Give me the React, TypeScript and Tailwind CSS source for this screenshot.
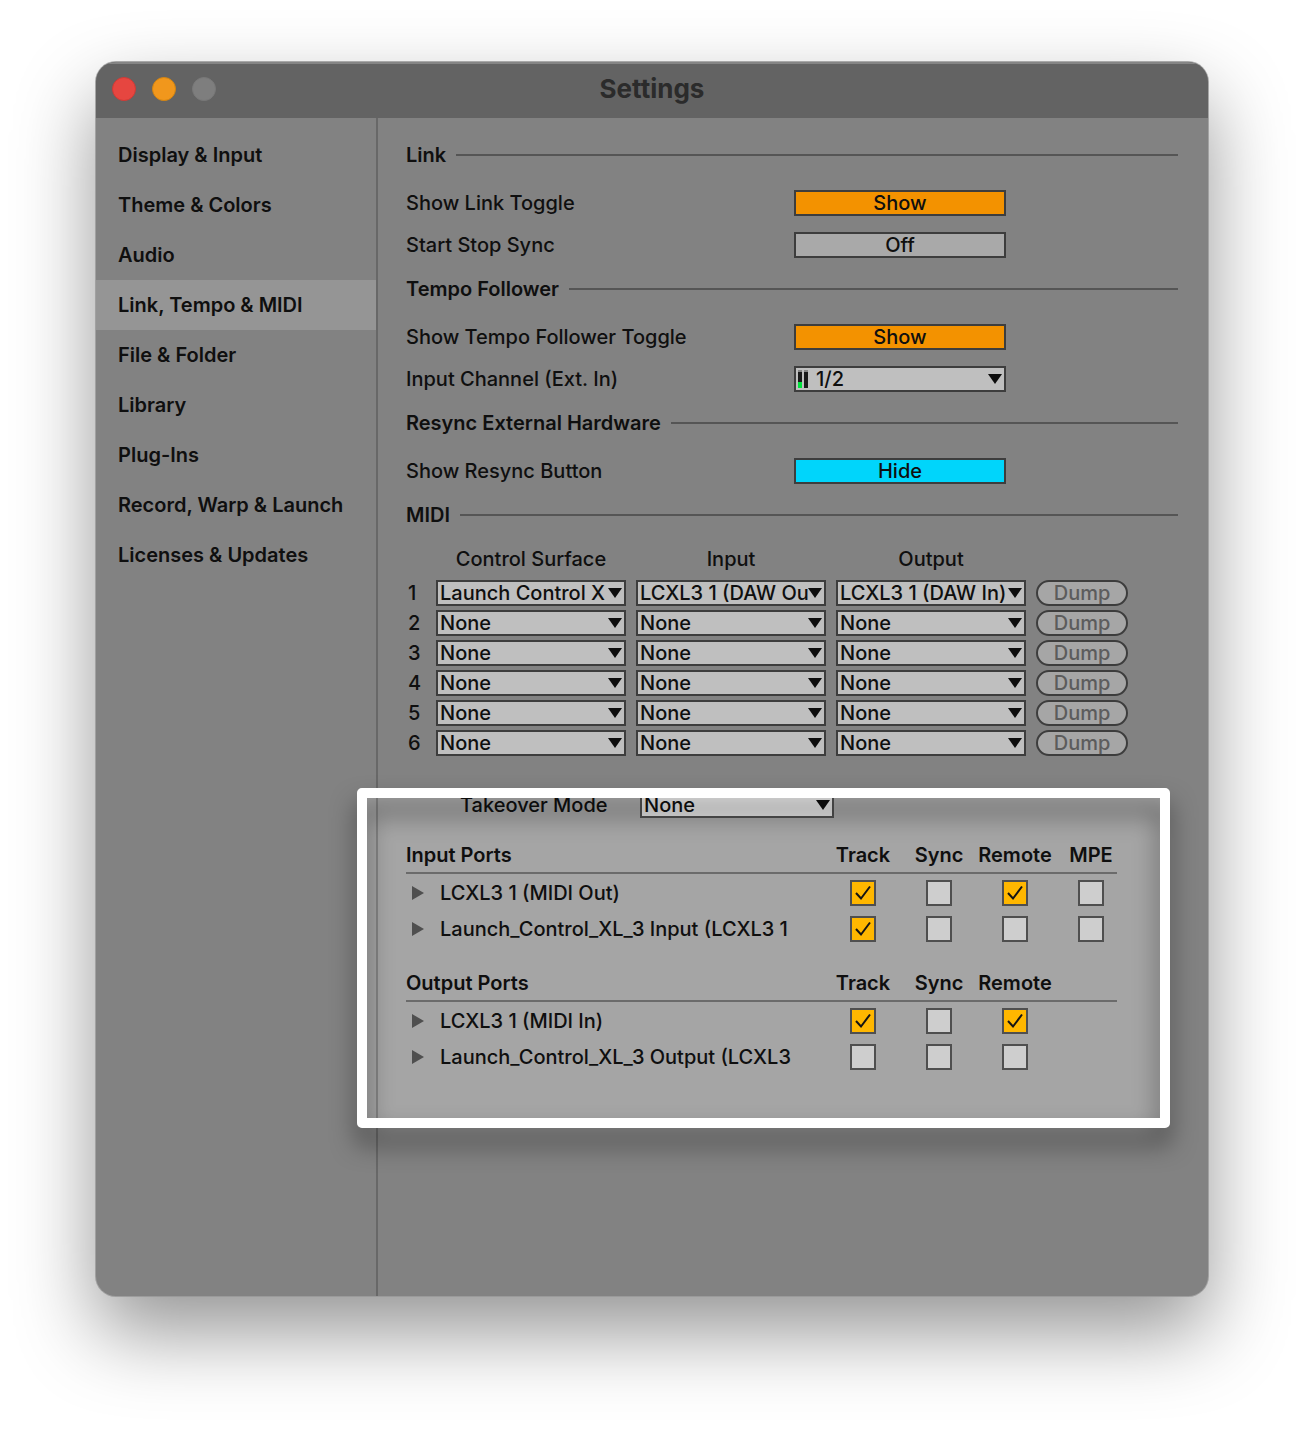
import React from "react";
import clsx from "clsx";

const pages = [
  "Display & Input",
  "Theme & Colors",
  "Audio",
  "Link, Tempo & MIDI",
  "File & Folder",
  "Library",
  "Plug-Ins",
  "Record, Warp & Launch",
  "Licenses & Updates",
];

const surfaces = [
  { surface: "Launch Control X", input: "LCXL3 1 (DAW Ou", output: "LCXL3 1 (DAW In)" },
  { surface: "None", input: "None", output: "None" },
  { surface: "None", input: "None", output: "None" },
  { surface: "None", input: "None", output: "None" },
  { surface: "None", input: "None", output: "None" },
  { surface: "None", input: "None", output: "None" },
];

type Port = { name: string; checks: boolean[] };

const inputPorts: Port[] = [
  { name: "LCXL3 1 (MIDI Out)", checks: [true, false, true, false] },
  { name: "Launch_Control_XL_3 Input (LCXL3 1", checks: [true, false, false, false] },
];

const outputPorts: Port[] = [
  { name: "LCXL3 1 (MIDI In)", checks: [true, false, true] },
  { name: "Launch_Control_XL_3 Output (LCXL3", checks: [false, false, false] },
];

const SectionHeader = ({ title }: { title: string }) => (
  <div className="flex h-[26px] items-center gap-2.5">
    <h2 className="font-semibold">{title}</h2>
    <div className="h-0.5 flex-1 bg-[#555555]" />
  </div>
);

const Row = ({ label, htmlFor, children }: { label: string; htmlFor: string; children: React.ReactNode }) => (
  <div className="flex h-[26px] items-center">
    <label htmlFor={htmlFor} className="w-[388px] shrink-0">{label}</label>
    <div className="w-[212px]">{children}</div>
  </div>
);

const Toggle = ({ id, text, color }: { id: string; text: string; color: string }) => (
  <button id={id} type="button" className={clsx("block h-[26px] w-full border-2 border-[#3d3d3d] text-center leading-[22px]", color)}>
    {text}
  </button>
);

type DropdownProps = { id?: string; value: string; label?: string; meter?: boolean; lit?: boolean };

const Dropdown = ({ id, value, label, meter = false, lit = false }: DropdownProps) => (
  <div className="relative">
    <select
      id={id}
      aria-label={label}
      defaultValue={value}
      className={clsx(
        "block h-[26px] w-full appearance-none rounded-none border-2 pr-4 leading-[22px]",
        meter ? "pl-5" : "pl-0.5",
        lit ? "border-[#4f4f4f] bg-[#e2e2e2]" : "border-[#3d3d3d] bg-[#bfbfbf]"
      )}
    >
      <option>{value}</option>
    </select>
    {meter && (
      <svg className="pointer-events-none absolute top-1 left-1" width="10" height="18" viewBox="0 0 10 18">
        <path d="M0 0h4v2H0zM6 0h4v2H6z" fill="#858585" />
        <path d="M0 2h4v10H0zM6 2h4v16H6z" fill="#1a1a1a" />
        <path d="M0 12h4v6H0z" fill="#00e13c" />
      </svg>
    )}
    <svg className="pointer-events-none absolute top-2 right-1" width="14" height="10" viewBox="0 0 14 10">
      <path d="M0 0h14L7 10z" fill="#0d0d0d" />
    </svg>
  </div>
);

const CheckBox = ({ label, checked }: { label: string; checked: boolean }) => (
  <span className="relative mx-auto block h-[26px] w-[26px]">
    <input
      type="checkbox"
      aria-label={label}
      defaultChecked={checked}
      className="peer block h-[26px] w-[26px] appearance-none border-2 border-[#4f4f4f] bg-[#cecece] checked:bg-[#ffb700]"
    />
    <svg className="pointer-events-none absolute inset-0 hidden peer-checked:block" width="26" height="26" viewBox="0 0 26 26">
      <path d="M6 13l5 5.5L20 6.5" fill="none" stroke="#141414" strokeWidth="2" />
    </svg>
  </span>
);

const PortTable = ({ title, columns, ports }: { title: string; columns: string[]; ports: Port[] }) => (
  <table className="w-[711px] table-fixed border-separate border-spacing-0">
    <colgroup>
      <col className="w-[419px]" />
      <col className="w-[76px]" />
      <col className="w-[76px]" />
      <col className="w-[76px]" />
      <col className="w-[64px]" />
    </colgroup>
    <thead>
      <tr>
        <th className="h-8 border-b-2 border-[#6b6b6b] pb-1 text-left font-semibold">{title}</th>
        {[0, 1, 2, 3].map((i) => (
          <th key={i} className="border-b-2 border-[#6b6b6b] pb-1 font-semibold last:pl-3">
            <span className="flex justify-center whitespace-nowrap">{columns[i]}</span>
          </th>
        ))}
      </tr>
    </thead>
    <tbody>
      {ports.map((port) => (
        <tr key={port.name}>
          <td className="pt-1.5 pb-1">
            <div className="flex h-[26px] items-center whitespace-nowrap">
              <button type="button" aria-label={`Expand ${port.name}`} className="mr-4 ml-1.5 shrink-0">
                <svg width="12" height="14" viewBox="0 0 12 14">
                  <path d="M0 0l12 7-12 7z" fill="#4f4f4f" />
                </svg>
              </button>
              {port.name}
            </div>
          </td>
          {[0, 1, 2, 3].map((i) => (
            <td key={i} className="pt-1.5 pb-1 last:pl-3">
              {i < port.checks.length && <CheckBox label={`${port.name} ${columns[i]}`} checked={port.checks[i]} />}
            </td>
          ))}
        </tr>
      ))}
    </tbody>
  </table>
);

export default function App() {
  return (
    <div className="min-h-screen bg-white px-24 pt-[62px] pb-[134px] font-['Inter',sans-serif] text-[20px] leading-[26px] font-[450] text-[#0f0f0f]">
      <div className="min-w-[1112px] overflow-hidden rounded-[20px] bg-[#828282] shadow-[0_0_0_1px_rgba(150,150,150,0.8),0_36px_80px_rgba(0,0,0,0.42)]">
        {/* Title bar */}
        <header className="relative flex h-14 items-center justify-center bg-[#636363] pb-0.5 shadow-[inset_0_2px_0_#858585]">
          <div className="absolute left-4 flex gap-4">
            <button type="button" aria-label="Close" className="h-6 w-6 rounded-full border border-[#cf3a35] bg-[#e64640]" />
            <button type="button" aria-label="Minimize" className="h-6 w-6 rounded-full border border-[#d48410] bg-[#f1971c]" />
            <button type="button" aria-label="Zoom" className="h-6 w-6 rounded-full border border-[#787878] bg-[#7e7e7e]" />
          </div>
          <h1 className="text-[26px] font-bold text-[#2b2b2b]">Settings</h1>
        </header>

        <div className="isolate flex">
          <aside className="w-[282px] shrink-0 border-r-2 border-black/20 pt-3">
            <nav>
              {pages.map((page) => (
                <a
                  key={page}
                  href="#"
                  className={clsx("flex h-[50px] items-center pl-[22px] font-semibold whitespace-nowrap", page === "Link, Tempo & MIDI" && "bg-[#959595]")}
                >
                  {page}
                </a>
              ))}
            </nav>
          </aside>

          <main className="flex-1 pt-6 pr-[30px] pb-[222px] pl-7">
            <section className="mb-[18px]">
              <SectionHeader title="Link" />
              <div className="mt-[22px] space-y-4">
                <Row label="Show Link Toggle" htmlFor="link"><Toggle id="link" text="Show" color="bg-[#f39200]" /></Row>
                <Row label="Start Stop Sync" htmlFor="sync"><Toggle id="sync" text="Off" color="bg-[#a9a9a9]" /></Row>
              </div>
            </section>

            <section className="mb-[18px]">
              <SectionHeader title="Tempo Follower" />
              <div className="mt-[22px] space-y-4">
                <Row label="Show Tempo Follower Toggle" htmlFor="follower"><Toggle id="follower" text="Show" color="bg-[#f39200]" /></Row>
                <Row label="Input Channel (Ext. In)" htmlFor="channel"><Dropdown id="channel" value="1/2" meter /></Row>
              </div>
            </section>

            <section className="mb-[18px]">
              <SectionHeader title="Resync External Hardware" />
              <div className="mt-[22px]">
                <Row label="Show Resync Button" htmlFor="resync"><Toggle id="resync" text="Hide" color="bg-[#00d5fb]" /></Row>
              </div>
            </section>

            <section>
              <SectionHeader title="MIDI" />
              <table className="mt-[18px] w-[722px] table-fixed border-collapse">
                <colgroup>
                  <col className="w-[30px]" />
                  <col className="w-[200px]" />
                  <col className="w-[200px]" />
                  <col className="w-[200px]" />
                  <col className="w-[92px]" />
                </colgroup>
                <thead>
                  <tr>
                    <th />
                    <th className="pr-2.5 pb-2 font-[450]">Control Surface</th>
                    <th className="pr-2.5 pb-2 font-[450]">Input</th>
                    <th className="pr-2.5 pb-2 font-[450]">Output</th>
                    <th />
                  </tr>
                </thead>
                <tbody>
                  {surfaces.map((row, idx) => (
                    <tr key={idx}>
                      <td className="pb-1 pl-0.5">{idx + 1}</td>
                      <td className="pr-2.5 pb-1"><Dropdown value={row.surface} label={`Control Surface ${idx + 1}`} /></td>
                      <td className="pr-2.5 pb-1"><Dropdown value={row.input} label={`Input ${idx + 1}`} /></td>
                      <td className="pr-2.5 pb-1"><Dropdown value={row.output} label={`Output ${idx + 1}`} /></td>
                      <td className="pb-1">
                        <button type="button" className="block h-[26px] w-full rounded-full border-2 border-[#3d3d3d] bg-[#a6a6a6] leading-[22px] text-[#5c5c5c]">
                          Dump
                        </button>
                      </td>
                    </tr>
                  ))}
                </tbody>
              </table>
            </section>

            {/* Ports, with the spotlight frame around them */}
            <section className="relative mt-8">
              <div className="absolute -top-1 right-2 -bottom-[54px] -left-[49px] -z-10 rounded-[5px] bg-[#a5a5a5]" />
              <div className="flex h-[26px] items-center pl-[54px]">
                <label htmlFor="takeover" className="w-[180px]">Takeover Mode</label>
                <div className="w-[194px]"><Dropdown id="takeover" value="None" lit /></div>
              </div>
              <div className="mt-6 space-y-6">
                <PortTable title="Input Ports" columns={["Track", "Sync", "Remote", "MPE"]} ports={inputPorts} />
                <PortTable title="Output Ports" columns={["Track", "Sync", "Remote"]} ports={outputPorts} />
              </div>
              <div className="pointer-events-none absolute -top-1 right-2 -bottom-[54px] -left-[49px] z-10 rounded-[5px] border-[10px] border-white drop-shadow-[0_16px_12px_rgba(0,0,0,0.5)]" />
            </section>
          </main>
        </div>
      </div>
    </div>
  );
}
